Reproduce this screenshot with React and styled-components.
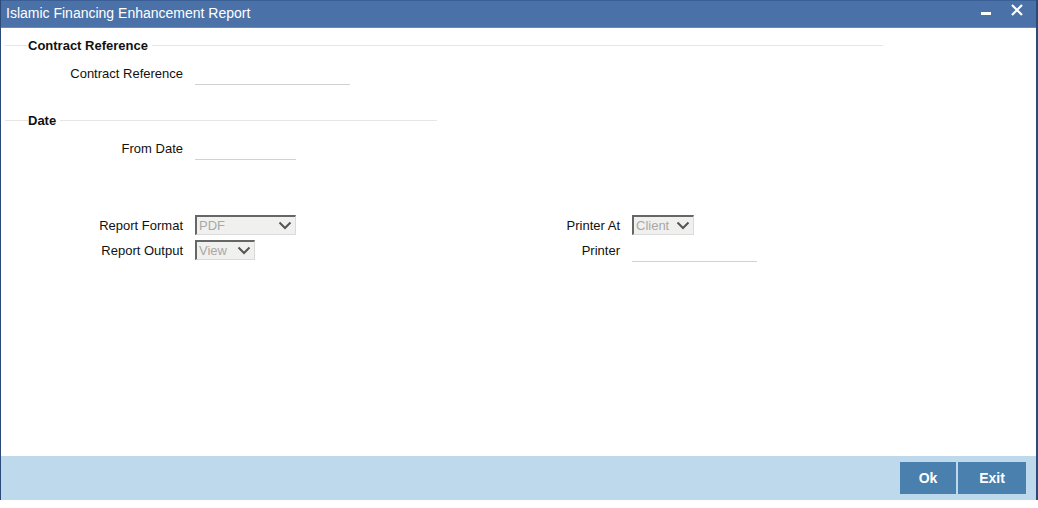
import React from 'react'
import styled, { createGlobalStyle } from 'styled-components';

const Global = createGlobalStyle`
    body {
        margin: 0;
        background: #fff;
        font-family: "Liberation Sans", Arial, sans-serif;
    }
`

const Field = ({ label, children }) => (
    <Row>
        <Label>{label}</Label>
        {children}
    </Row>
)

const Select = ({ value, width }) => (
    <SelectBox width={width}>
        <span>{value}</span>
        <svg width="14" height="9" viewBox="0 0 14 9">
            <path d="M1.5 1.5 L7 7 L12.5 1.5" fill="none" stroke="#555" strokeWidth="2" />
        </svg>
    </SelectBox>
)

const App = () => {
    return (
        <>
            <Global />
            <Window>
                <TitleBar>
                    <Title>Islamic Financing Enhancement Report</Title>
                    <Controls>
                        <svg width="12" height="12" viewBox="0 0 12 12">
                            <rect x="1" y="8" width="10" height="3" fill="#fff" />
                        </svg>
                        <svg width="14" height="14" viewBox="0 0 14 14">
                            <path d="M2 2 L12 12 M12 2 L2 12" stroke="#fff" strokeWidth="2.2" />
                        </svg>
                    </Controls>
                </TitleBar>
                <Body>
                    <Section width={878}>
                        <Legend>Contract Reference</Legend>
                    </Section>
                    <Fields>
                        <Field label="Contract Reference"><TextInput width={155} /></Field>
                    </Fields>
                    <Section width={432} top={26}>
                        <Legend>Date</Legend>
                    </Section>
                    <Fields>
                        <Field label="From Date"><TextInput width={101} /></Field>
                    </Fields>
                    <Columns>
                        <Column>
                            <Field label="Report Format"><Select value="PDF" width={101} /></Field>
                            <Field label="Report Output"><Select value="View" width={60} /></Field>
                        </Column>
                        <Column>
                            <Field label="Printer At"><Select value="Client" width={62} /></Field>
                            <Field label="Printer"><TextInput width={125} /></Field>
                        </Column>
                    </Columns>
                </Body>
                <Footer>
                    <Button>Ok</Button>
                    <Button wide>Exit</Button>
                </Footer>
            </Window>
        </>
    )
}

const Window = styled.div`
    width: 1038px;
    height: 500px;
    box-sizing: border-box;
    display: flex;
    flex-direction: column;
    border-left: 1px solid #2c4a78;
    border-right: 2px solid #2c4a78;
`
const TitleBar = styled.div`
    height: 28px;
    flex-shrink: 0;
    box-sizing: border-box;
    background: #4a72a8;
    border-top: 1px solid #3a5f94;
    border-bottom: 1px solid #6f8aa8;
    display: flex;
    align-items: center;
    justify-content: space-between;
    padding: 0 12px 0 5px;
`
const Title = styled.div`
    color: #fff;
    font-size: 14px;
    margin-top: -2px;
`
const Controls = styled.div`
    display: flex;
    align-items: center;
    gap: 18px;
    margin-top: -8px;
`
const Body = styled.div`
    flex: 1;
    padding-top: 9px;
`
const Section = styled.div`
    position: relative;
    margin-left: 4px;
    margin-top: ${({ top }) => top || 0}px;
    width: ${({ width }) => width}px;
    height: 16px;
    display: flex;
    align-items: center;
    &::before {
        content: '';
        position: absolute;
        left: 0; right: 0; top: 8px;
        border-top: 1px solid #e6e6e6;
    }
`
const Legend = styled.span`
    position: relative;
    margin-left: 23px;
    padding-right: 4px;
    background: #fff;
    font-size: 13px;
    font-weight: bold;
    color: #111;
`
const Fields = styled.div`
    padding-top: 8px;
    display: flex;
    flex-direction: column;
`
const Row = styled.div`
    display: flex;
    align-items: center;
    height: 25px;
`
const Label = styled.div`
    width: 194px;
    text-align: right;
    padding-right: 12px;
    box-sizing: border-box;
    font-size: 13px;
    color: #111;
`
const TextInput = styled.div`
    width: ${({ width }) => width}px;
    height: 20px;
    margin-top: 2px;
    border-bottom: 1px solid #d2d2d2;
`
const Columns = styled.div`
    display: grid;
    grid-template-columns: 437px 1fr;
    margin-top: 52px;
`
const Column = styled.div`
    display: flex;
    flex-direction: column;
`
const SelectBox = styled.div`
    width: ${({ width }) => width}px;
    height: 20px;
    margin-top: -2px;
    box-sizing: border-box;
    background: #f0f0ef;
    border: 1px solid #dadada;
    border-left: 2px solid #666;
    border-top: 2px solid #666;
    display: flex;
    align-items: center;
    justify-content: space-between;
    padding: 0 3px 0 2px;
    color: #a8a8a8;
    font-size: 13px;
`
const Footer = styled.div`
    height: 44px;
    flex-shrink: 0;
    background: #bed9ec;
    display: flex;
    justify-content: flex-end;
    align-items: center;
    gap: 2px;
    padding-right: 10px;
`
const Button = styled.button`
    width: ${({ wide }) => wide ? 68 : 56}px;
    height: 32px;
    border: none;
    background: #4a80ae;
    color: #fff;
    font-family: "Liberation Sans", Arial, sans-serif;
    font-size: 14px;
    font-weight: bold;
`

export default App;
